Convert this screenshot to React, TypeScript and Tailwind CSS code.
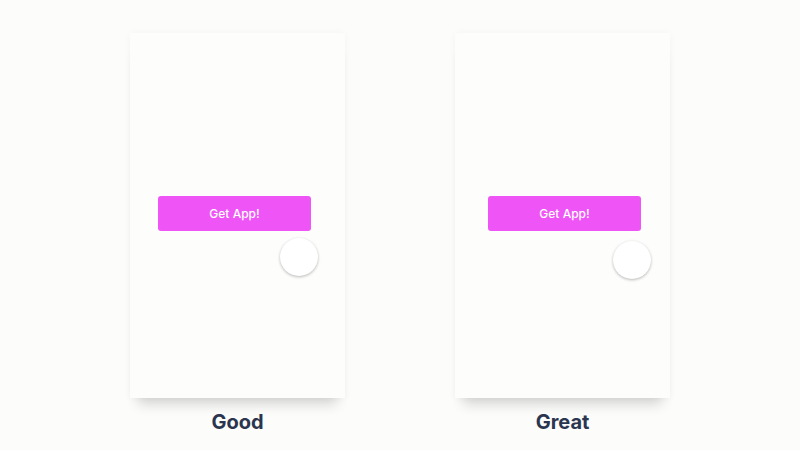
import React from "react";

function Card({ label, btnLeft, circleLeft, circleTop }: { label: string; btnLeft: string; circleLeft: string; circleTop: string }) {
  return (
    <div className="flex flex-col items-center">
      <div className="relative w-[215px] h-[365px] bg-[#fdfdfc] shadow-[0_14px_12px_-8px_rgba(0,0,0,0.16),0_0_8px_rgba(0,0,0,0.035)]">
        <div className={`mt-[163px] ${btnLeft} w-[153px] h-[35px] rounded-[3px] bg-[#ef55f6] flex items-center justify-center text-white text-[12px] font-medium`}>
          Get App!
        </div>
        <div className={`absolute ${circleLeft} ${circleTop} w-[38px] h-[38px] rounded-full bg-white shadow-[0_1px_3px_rgba(0,0,0,0.28)]`} />
      </div>
      <div className="mt-[10px] text-[20px] leading-[28px] font-bold text-[#2b3550]">{label}</div>
    </div>
  );
}

export default function App() {
  return (
    <div className="w-[800px] h-[450px] bg-[#fcfcfa] flex justify-center pt-[33px] gap-[110px]" style={{ fontFamily: "Inter, 'Noto Sans', sans-serif" }}>
      <Card label="Good" btnLeft="ml-[28px]" circleLeft="left-[150px]" circleTop="top-[205px]" />
      <Card label="Great" btnLeft="ml-[33px]" circleLeft="left-[158px]" circleTop="top-[208px]" />
    </div>
  );
}
